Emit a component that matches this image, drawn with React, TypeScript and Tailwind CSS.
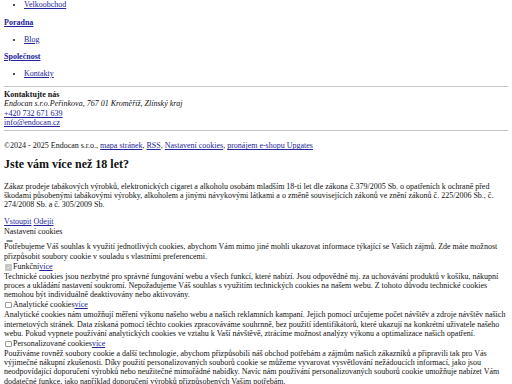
const link = "text-[#23239a] underline";

function Check({ checked }: { checked?: boolean }) {
  if (checked) {
    return (
      <span className="mr-[1.5px] ml-[1px] inline-flex h-[6.5px] w-[6.5px] items-center justify-center rounded-[1px] bg-[#c6c6c6] align-[-1px]">
        <svg viewBox="0 0 10 10" className="h-[5px] w-[5px]">
          <path d="M2 5.2 4.1 7.3 8 2.8" fill="none" stroke="#f4f4f4" strokeWidth="1.6" />
        </svg>
      </span>
    );
  }
  return (
    <span className="mr-[1.5px] ml-[1px] inline-block h-[6.5px] w-[6.5px] rounded-[1px] border border-[#9a9a9a] bg-white align-[-1px]" />
  );
}

function Option({ label, checked, children }: { label: string; checked?: boolean; children: string }) {
  return (
    <div>
      <label className="block leading-[11px]">
        <Check checked={checked} />
        {label}
        <a href="#" className={link}>více</a>
      </label>
      <p>{children}</p>
    </div>
  );
}

export default function App() {
  return (
    <div className="h-[384px] overflow-hidden bg-white px-[4px] font-['Liberation_Serif',serif] text-[8px] leading-[9.2px] text-[#111]">
      <ul className="-mt-[8.9px] list-disc pl-[20px]">
        <li><a href="#" className={link}>Kamenné prodejny</a></li>
        <li><a href="#" className={link}>Velkoobchod</a></li>
      </ul>
      <p className="mt-[8px] font-bold"><a href="#" className={link}>Poradna</a></p>
      <ul className="mt-[8px] list-disc pl-[20px]">
        <li><a href="#" className={link}>Blog</a></li>
      </ul>
      <p className="mt-[8px] font-bold"><a href="#" className={link}>Společnost</a></p>
      <ul className="mt-[8px] list-disc pl-[20px]">
        <li><a href="#" className={link}>Kontakty</a></li>
      </ul>

      <hr className="mt-[7.7px] border-[#c4c4c4]" />
      <div className="mt-[2.7px] leading-[9.6px]">
        <strong className="block">Kontaktujte nás</strong>
        <em className="block">Endocan s.r.o.Peřinkova, 767 01 Kroměříž, Zlínský kraj</em>
        <a href="#" className={`${link} block w-fit`}>+420 732 671 639</a>
        <a href="#" className={`${link} block w-fit`}>info@endocan.cz</a>
      </div>
      <hr className="mt-[2.3px] border-[#c4c4c4]" />

      <p className="mt-[10px]">
        ©2024 - 2025 Endocan s.r.o., <a href="#" className={link}>mapa stránek</a>,{" "}
        <a href="#" className={link}>RSS</a>, <a href="#" className={link}>Nastavení cookies</a>,{" "}
        <a href="#" className={link}>pronájem e-shopu Upgates</a>
      </p>

      <h2 className="mt-[7.5px] text-[12px] font-bold leading-[13.8px]">Jste vám více než 18 let?</h2>
      <p className="mt-[10px]">
        Zákaz prodeje tabákových výrobků, elektronických cigaret a alkoholu osobám mladším 18-ti let dle zákona
        č.379/2005 Sb. o opatřeních k ochraně před škodami působenými tabákovými výrobky, alkoholem a jinými
        návykovými látkami a o změně souvisejících zákonů ve znění zákonů č. 225/2006 Sb., č. 274/2008 Sb. a č.
        305/2009 Sb.
      </p>
      <div className="mt-[8px]">
        <a href="#" className={link}>Vstoupit</a> <a href="#" className={link}>Odejít</a>
      </div>
      <div>Nastavení cookies</div>
      <button className="mt-[4px] ml-[2px] block h-[2.5px] w-[7px] rounded-[1px] border-[0.5px] border-[#8a8a8a] bg-[#efefef]" />
      <p>
        Potřebujeme Váš souhlas k využití jednotlivých cookies, abychom Vám mimo jiné mohli ukazovat informace
        týkající se Vašich zájmů. Zde máte možnost přizpůsobit soubory cookie v souladu s vlastními preferencemi.
      </p>
      <Option label="Funkční" checked>
        Technické cookies jsou nezbytné pro správné fungování webu a všech funkcí, které nabízí. Jsou odpovědné mj.
        za uchovávání produktů v košíku, nákupní proces a ukládání nastavení soukromí. Nepožadujeme Váš souhlas s
        využitím technických cookies na našem webu. Z tohoto důvodu technické cookies nemohou být individuálně
        deaktivovány nebo aktivovány.
      </Option>
      <Option label="Analytické cookies">
        Analytické cookies nám umožňují měření výkonu našeho webu a našich reklamních kampaní. Jejich pomocí
        určujeme počet návštěv a zdroje návštěv našich internetových stránek. Data získaná pomocí těchto cookies
        zpracováváme souhrnně, bez použití identifikátorů, které ukazují na konkrétní uživatele našeho webu. Pokud
        vypnete používání analytických cookies ve vztahu k Vaší návštěvě, ztrácíme možnost analýzy výkonu a
        optimalizace našich opatření.
      </Option>
      <Option label="Personalizované cookies">
        Používáme rovněž soubory cookie a další technologie, abychom přizpůsobili náš obchod potřebám a zájmům
        našich zákazníků a připravili tak pro Vás výjimečné nákupní zkušenosti. Díky použití personalizovaných
        souborů cookie se můžeme vyvarovat vysvětlování nežádoucích informací, jako jsou neodpovídající doporučení
        výrobků nebo neužitečné mimořádné nabídky. Navíc nám používání personalizovaných souborů cookie umožňuje
        nabízet Vám dodatečné funkce, jako například doporučení výrobků přizpůsobených Vašim potřebám.
      </Option>
      <Option label="Marketingové cookies">
        Marketingové cookies používáme my nebo naši partneři, abychom Vám mohli zobrazit vhodné obsahy nebo reklamy.
      </Option>
    </div>
  );
}
